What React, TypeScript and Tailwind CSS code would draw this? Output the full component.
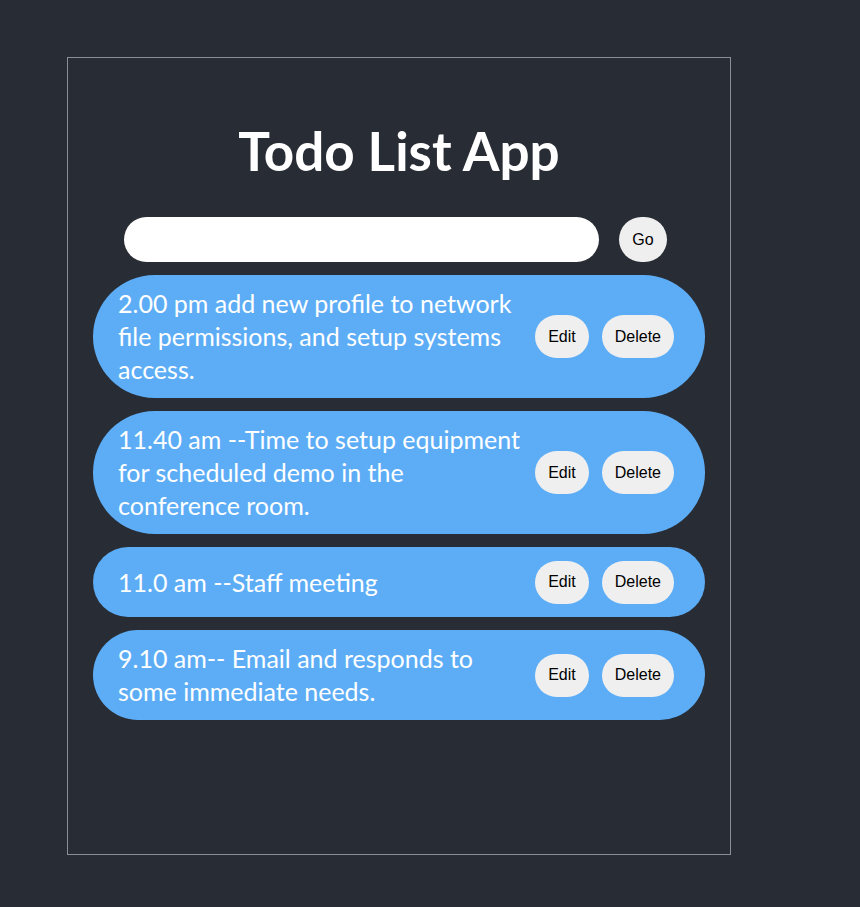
import { useState } from 'react';

interface Todo {
  id: number;
  text: string;
}

const initialTodos: Todo[] = [
  { id: 1, text: '2.00 pm add new profile to network file permissions, and setup systems access.' },
  { id: 2, text: '11.40 am --Time to setup equipment for scheduled demo in the conference room.' },
  { id: 3, text: '11.0 am --Staff meeting' },
  { id: 4, text: '9.10 am-- Email and responds to some immediate needs.' },
];

const btn =
  'shrink-0 rounded-full bg-[#efefef] px-[13px] text-[16px] text-black font-["Liberation_Sans",Arial,sans-serif]';

const TodoItem = ({ todo }: { todo: Todo }) => (
  <li className="flex min-h-[70px] items-center rounded-full bg-[#5dadf6] py-3 pl-[25px] pr-[31px]">
    <span className="flex-1 pr-[10px] text-[25px] leading-[33px] text-white">{todo.text}</span>
    <div className="flex items-center gap-[13px]">
      <button className={`${btn} h-[43px]`}>Edit</button>
      <button className={`${btn} h-[43px]`}>Delete</button>
    </div>
  </li>
);

export default function App() {
  const [todos] = useState<Todo[]>(initialTodos);
  const [value, setValue] = useState('');

  return (
    <div className="min-h-screen bg-[#282c34] pl-[67px] pt-[57px] font-['Lato','Noto_Sans',sans-serif]">
      <div className="flex h-[798px] w-[664px] flex-col items-center border border-[#8b8e94] pt-[58px]">
        {/* Header */}
        <h1 className="text-[53px] font-bold leading-[70px] text-white">Todo List App</h1>

        {/* Input row */}
        <div className="mt-[31px] flex items-center gap-5 pr-[7px]">
          <input
            value={value}
            onChange={(e) => setValue(e.target.value)}
            className="h-[45px] w-[475px] rounded-full bg-white px-5 text-[20px] outline-none"
          />
          <button className={`${btn} h-[45px]`}>Go</button>
        </div>

        {/* List */}
        <ul className="mt-[13px] flex w-[612px] flex-col gap-[13px]">
          {todos.map((todo) => (
            <TodoItem key={todo.id} todo={todo} />
          ))}
        </ul>
      </div>
    </div>
  );
}
